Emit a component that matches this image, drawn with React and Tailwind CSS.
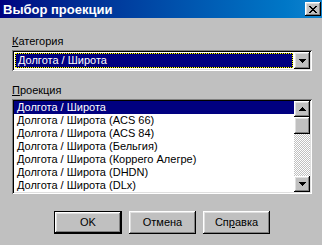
import React from "react";

const raised =
  "shadow-[inset_-1px_-1px_#000000,inset_1px_1px_#ffffff,inset_-2px_-2px_#808080,inset_2px_2px_#dfdfdf]";
const sunken =
  "shadow-[inset_1px_1px_#808080,inset_-1px_-1px_#ffffff,inset_2px_2px_#000000,inset_-2px_-2px_#dfdfdf]";

function Arrow({ up }) {
  return (
    <svg width="7" height="4" viewBox="0 0 7 4" shapeRendering="crispEdges">
      {up ? (
        <path d="M3 0h1v1H3zM2 1h3v1H2zM1 2h5v1H1zM0 3h7v1H0z" fill="#000" />
      ) : (
        <path d="M0 0h7v1H0zM1 1h5v1H1zM2 2h3v1H2zM3 3h1v1H3z" fill="#000" />
      )}
    </svg>
  );
}

function CloseGlyph() {
  return (
    <svg width="8" height="7" viewBox="0 0 8 7" shapeRendering="crispEdges">
      <path
        d="M0 0h2v1H0zM6 0h2v1H6zM1 1h2v1H1zM5 1h2v1H5zM2 2h4v1H2zM3 3h2v1H3zM2 4h4v1H2zM1 5h2v1H1zM5 5h2v1H5zM0 6h2v1H0zM6 6h2v1H6z"
        fill="#000"
      />
    </svg>
  );
}

const items = [
  "Долгота / Широта",
  "Долгота / Широта (ACS 66)",
  "Долгота / Широта (ACS 84)",
  "Долгота / Широта (Бельгия)",
  "Долгота / Широта (Коррего Алегре)",
  "Долгота / Широта (DHDN)",
  "Долгота / Широта (DLx)",
];

function Button({ children, isDefault, width }) {
  if (isDefault) {
    return (
      <div className={`h-[23px] ${width} border border-black bg-[#c0c0c0]`}>
        <div className={`flex h-full w-full items-center justify-center ${raised}`}>
          {children}
        </div>
      </div>
    );
  }
  return (
    <div className={`flex h-[23px] ${width} items-center justify-center bg-[#c0c0c0] ${raised}`}>
      {children}
    </div>
  );
}

export default function App() {
  return (
    <div className="h-[245px] w-[322px] overflow-hidden bg-[#c0c0c0] font-['Liberation_Sans',Arial,sans-serif] text-[11px] leading-[13px] text-black">
      {/* Title bar */}
      <div className="flex h-[18px] items-center justify-between bg-gradient-to-r from-[#000080] to-[#1084d0] pl-[3px] pr-[1px]">
        <span className="text-[13px] font-bold leading-[15px] text-white">Выбор проекции</span>
        <div className={`flex h-[14px] w-[16px] items-center justify-center bg-[#c0c0c0] ${raised}`}>
          <CloseGlyph />
        </div>
      </div>

      <div className="px-[12px] pt-[17px]">
        <div className="h-[13px]">
          <span className="underline underline-offset-[1px]">К</span>атегория
        </div>

        {/* Combo */}
        <div className={`mt-[2px] flex h-[21px] w-[300px] bg-white p-[2px] ${sunken}`}>
          <div className="flex-1 p-[1px]">
            <div className="h-full border border-dotted border-[#ffff00] bg-black">
              <div className="flex h-full items-center bg-[#000080] pl-[2px] text-white">
                Долгота / Широта
              </div>
            </div>
          </div>
          <div className={`flex h-[17px] w-[16px] items-center justify-center bg-[#c0c0c0] ${raised}`}>
            <Arrow />
          </div>
        </div>

        <div className="mt-[13px] h-[13px]">
          <span className="underline underline-offset-[1px]">П</span>роекция
        </div>

        {/* Listbox */}
        <div className={`mt-[2px] flex h-[95px] w-[300px] bg-white p-[2px] ${sunken}`}>
          <div className="flex-1 overflow-hidden">
            {items.map((t, i) => (
              <div
                key={t}
                className={`h-[13px] whitespace-nowrap pl-[3px] ${
                  i === 0 ? "bg-[#000080] text-white" : ""
                }`}
              >
                {t}
              </div>
            ))}
          </div>
          <div className="flex w-[16px] flex-col">
            <div className={`flex h-[16px] w-[16px] items-center justify-center bg-[#c0c0c0] ${raised}`}>
              <Arrow up />
            </div>
            <div className={`h-[17px] w-[16px] bg-[#c0c0c0] ${raised}`} />
            <div className="flex-1 bg-[image:repeating-conic-gradient(#c0c0c0_0_25%,#ffffff_0_50%)] bg-[length:2px_2px]" />
            <div className={`flex h-[16px] w-[16px] items-center justify-center bg-[#c0c0c0] ${raised}`}>
              <Arrow />
            </div>
          </div>
        </div>

        {/* Buttons */}
        <div className="mt-[17px] flex gap-[7px] pl-[42px]">
          <Button isDefault width="w-[68px]">OK</Button>
          <Button width="w-[67px]">Отмена</Button>
          <Button width="w-[67px]">
            Сп<span className="underline underline-offset-[1px]">р</span>авка
          </Button>
        </div>
      </div>
    </div>
  );
}
